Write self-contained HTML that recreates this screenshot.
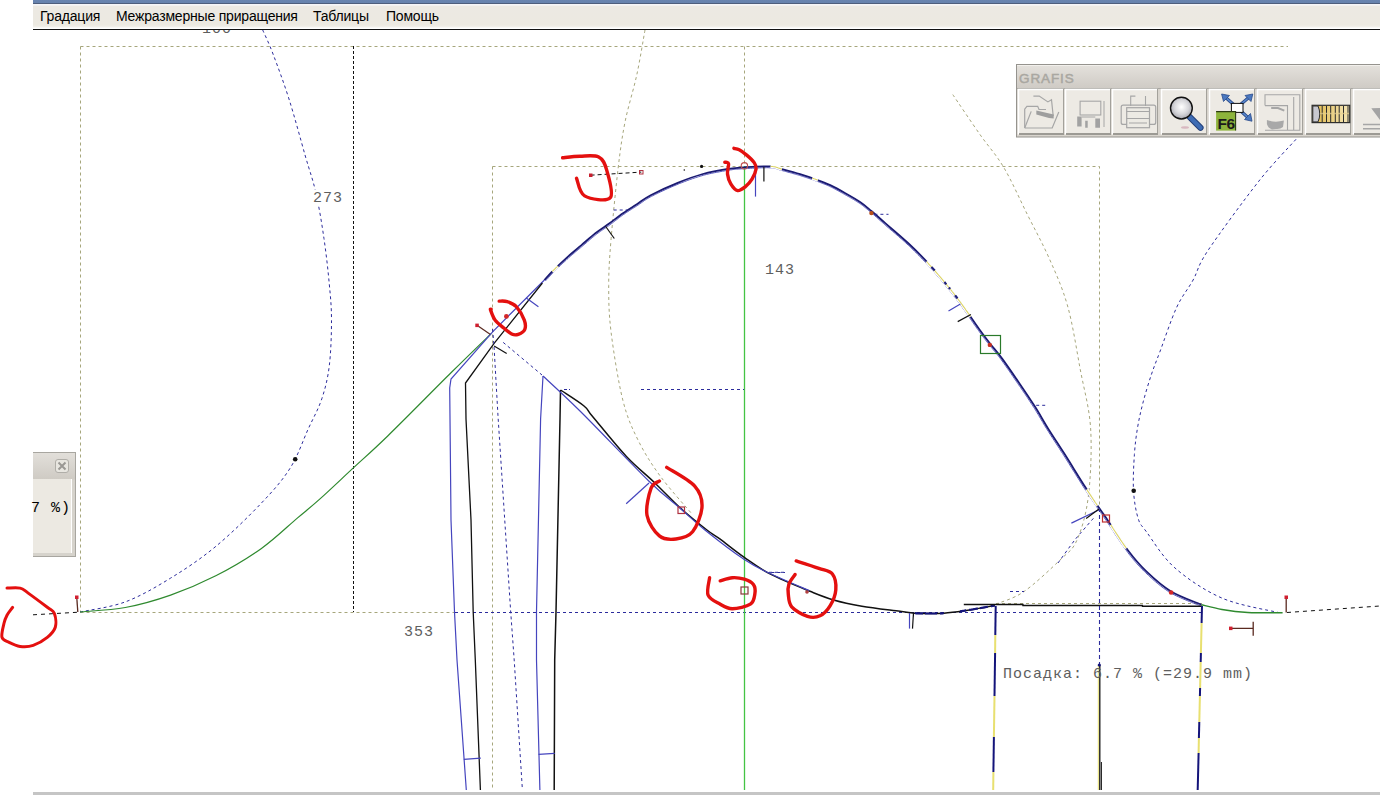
<!DOCTYPE html>
<html><head><meta charset="utf-8">
<style>
html,body{margin:0;padding:0;width:1380px;height:795px;overflow:hidden;background:#fff;position:relative;font-family:"Liberation Sans",sans-serif;}
#top{position:absolute;left:33px;top:0;width:1347px;height:4px;background:linear-gradient(#6884B0 0,#6682AD 2.8px,#4E5E7C 3px,#4E5E7C 4px);}
#menu{position:absolute;left:33px;top:4px;width:1347px;height:25px;background:linear-gradient(#F5F5F8 0,#F5F5F8 1px,#ECE9E3 2.5px,#ECE9E1 21px,#F2F0EB 23px,#FFFFFF 24px,#FFFFFF 25px);}
#menuline{position:absolute;left:33px;top:29px;width:1347px;height:1px;background:#111;}
.mi{position:absolute;top:3.5px;font-size:14px;letter-spacing:-0.2px;color:#000;white-space:nowrap;}
#bottom{position:absolute;left:33px;top:792px;width:1347px;height:3px;background:#C5C5C5;}
svg{position:absolute;left:0;top:0;}
.lbl{position:absolute;font-family:"Liberation Mono",monospace;font-size:15px;letter-spacing:1px;color:#5E5E5E;white-space:pre;line-height:16px;}
#dlg{position:absolute;left:33px;top:452px;width:43px;height:105px;background:linear-gradient(#E2DFDA,#CFCBC4 26px,#D6D3CC 27px);border:1px solid #A8A6A0;border-left:none;box-sizing:border-box;}
#dlgin{position:absolute;left:33px;top:479px;width:39px;height:74px;background:#ECE9E2;border-right:1px solid #FFFFFF;box-sizing:border-box;}
#dlgx{position:absolute;left:55px;top:459px;width:14px;height:14px;border:1px solid #B0AEA8;border-radius:3px;background:#E8E6E0;box-sizing:border-box;}
</style></head><body>
<svg width="1380" height="795" viewBox="0 0 1380 795" id="draw">
<path d="M80.5,46.5 H1288" fill="none" stroke="#A6A67C" stroke-width="1" stroke-dasharray="3 3" />
<path d="M80.5,46.5 V612.5" fill="none" stroke="#A6A67C" stroke-width="1" stroke-dasharray="3 3" />
<path d="M80.5,612.5 H455" fill="none" stroke="#A6A67C" stroke-width="1" stroke-dasharray="3 3" />
<path d="M492.5,166.5 H1099.5 V508" fill="none" stroke="#A6A67C" stroke-width="1" stroke-dasharray="3 3" />
<path d="M492.5,166.5 V790" fill="none" stroke="#A6A67C" stroke-width="1" stroke-dasharray="3 3" />
<path d="M744.5,46.5 V166" fill="none" stroke="#A6A67C" stroke-width="1" stroke-dasharray="3 3" />
<path d="M996,603.5 H1202" fill="none" stroke="#A6A67C" stroke-width="1" stroke-dasharray="3 3" />
<path d="M645.0,30.0 C643.6,37.5 640.1,59.5 636.8,74.8 C633.5,90.1 628.2,106.1 625.1,121.7 C622.0,137.3 620.4,149.0 618.1,168.5 C615.8,188.0 612.7,219.3 611.1,238.8 C609.5,258.3 608.7,270.0 608.7,285.6 C608.7,301.2 608.8,313.3 611.1,332.4 C613.5,351.5 618.3,382.1 622.8,400.0 C627.3,417.9 631.7,427.2 638.0,440.0 C644.3,452.8 651.6,464.3 660.6,476.6 C669.6,488.9 686.8,507.8 692.0,514.0" fill="none" stroke="#A6A67C" stroke-width="1" stroke-dasharray="3 3" />
<path d="M952.8,94.6 C957.3,101.3 971.6,122.5 980.1,134.7 C988.6,146.8 995.9,154.2 1003.8,167.5 C1011.7,180.8 1019.9,199.6 1027.5,214.8 C1035.1,230.0 1042.6,243.4 1049.3,258.6 C1056.0,273.8 1062.4,287.5 1067.6,306.0 C1072.8,324.5 1076.5,349.4 1080.3,369.7 C1084.1,390.0 1089.2,406.9 1090.6,428.0 C1091.9,449.1 1090.7,477.3 1088.4,496.0 C1086.1,514.7 1081.7,529.3 1077.0,540.0 C1072.3,550.7 1068.9,551.4 1060.0,560.0 C1051.1,568.6 1034.2,584.6 1023.5,591.9 C1012.8,599.2 1000.6,602.0 996.0,604.0" fill="none" stroke="#A6A67C" stroke-width="1" stroke-dasharray="3 3" />
<path d="M353.5,46 V612" fill="none" stroke="#111" stroke-width="1" stroke-dasharray="3 2" />
<path d="M33,614.8 L77,612.3" fill="none" stroke="#111" stroke-width="1" stroke-dasharray="4 4" />
<path d="M1287,612.5 L1380,606" fill="none" stroke="#111" stroke-width="1" stroke-dasharray="4 4" />
<path d="M455,612.5 H1201" fill="none" stroke="#2C2C9C" stroke-width="1" stroke-dasharray="3 3" />
<path d="M744.5,166 V790" fill="none" stroke="#44C444" stroke-width="1.3" />
<path d="M641,389.5 H744" fill="none" stroke="#2C2C9C" stroke-width="1" stroke-dasharray="3 3" />
<path d="M262.7,30.0 C264.5,34.1 268.9,43.0 273.3,54.7 C277.7,66.4 284.0,83.1 289.3,100.0 C294.6,116.9 300.9,140.4 305.3,156.0 C309.8,171.6 312.9,179.5 316.0,193.3 C319.1,207.1 321.8,223.5 324.0,238.7 C326.2,253.9 328.1,270.7 329.3,284.3 C330.6,297.9 331.5,306.8 331.5,320.4 C331.5,334.0 330.9,352.6 329.3,365.7 C327.7,378.8 325.3,388.2 321.8,398.8 C318.3,409.4 313.5,417.4 308.2,429.0 C302.9,440.6 298.0,455.8 290.1,468.2 C282.2,480.6 273.5,490.4 261.1,503.4 C248.7,516.4 230.9,533.9 215.8,546.4 C200.7,558.9 185.7,568.9 170.6,578.1 C155.5,587.4 140.4,596.2 125.3,601.9 C110.2,607.5 87.5,610.3 80.0,612.0" fill="none" stroke="#2C2C9C" stroke-width="1" stroke-dasharray="3 3" />
<path d="M1296.0,139.3 C1289.8,146.3 1273.5,162.6 1258.8,181.2 C1244.1,199.8 1218.7,234.4 1207.7,250.9 C1196.8,267.4 1198.3,270.5 1193.1,280.0 C1187.9,289.5 1182.0,295.7 1176.5,307.7 C1171.0,319.7 1164.0,340.9 1159.8,352.0 C1155.6,363.1 1154.3,365.9 1151.5,374.2 C1148.7,382.5 1145.5,393.1 1143.2,401.9 C1140.9,410.7 1139.2,418.0 1137.7,426.8 C1136.2,435.6 1135.1,443.9 1134.4,454.5 C1133.7,465.1 1132.9,479.8 1133.5,490.5 C1134.1,501.2 1136.0,511.7 1138.2,518.6 C1140.4,525.5 1140.5,523.8 1146.6,532.0 C1152.7,540.2 1162.3,556.9 1174.9,567.9 C1187.5,578.9 1204.7,590.6 1222.0,598.1 C1239.3,605.6 1269.2,610.2 1278.7,612.6" fill="none" stroke="#2C2C9C" stroke-width="1" stroke-dasharray="3 3" />
<path d="M80.0,612.0 C87.5,611.2 110.2,610.3 125.3,607.5 C140.4,604.7 155.5,600.4 170.6,595.1 C185.7,589.8 200.7,583.5 215.8,575.8 C230.9,568.1 247.5,558.3 261.1,548.7 C274.7,539.1 287.5,526.4 297.3,518.1 C307.1,509.8 310.8,507.2 320.0,498.9 C329.2,490.6 341.5,478.9 352.8,468.4 C364.1,457.9 371.6,451.6 388.0,435.7 C404.4,419.8 433.8,389.8 451.0,372.8 C468.2,355.8 484.3,340.3 491.0,333.8" fill="none" stroke="#2F8A2F" stroke-width="1.2" />
<path d="M1201.3,604.7 C1204.8,605.5 1214.2,608.1 1222.0,609.4 C1229.8,610.7 1237.7,611.8 1247.8,612.4 C1257.9,613.0 1276.8,612.7 1282.6,612.8" fill="none" stroke="#2F8A2F" stroke-width="1.5" />
<path d="M544.4,280.0 L493.1,331.3 L451.0,379.0 L449.7,388.0 L451.0,520.0 L454.5,612.0 L457.0,660.0 L466.3,790.0" fill="none" stroke="#4545BE" stroke-width="1.2" />
<path d="M542.4,283.0 L494.1,343.4 L465.5,383.0 L466.0,419.0 L471.0,520.0 L473.2,612.0 L475.3,660.0 L480.4,790.0" fill="none" stroke="#111" stroke-width="1.3" />
<path d="M492.6,329.0 L494.0,346.0 L498.0,416.0 L510.7,612.0 L514.2,660.0 L522.4,790.0" fill="none" stroke="#2C2C9C" stroke-width="1" stroke-dasharray="3 3" />
<path d="M503.2,342.4 L542.0,375.0" fill="none" stroke="#2C2C9C" stroke-width="1" stroke-dasharray="3 3" />
<path d="M543.0,376.0 L540.6,419.0 L536.5,612.0 L536.5,660.0 L539.9,790.0" fill="none" stroke="#4545BE" stroke-width="1.2" />
<path d="M560.5,390.0 L560.0,419.0 L556.0,612.0 L554.7,660.0 L554.2,790.0" fill="none" stroke="#111" stroke-width="1.5" />
<path d="M463.8,759.4 L480.8,758.2" fill="none" stroke="#4545BE" stroke-width="1.2" />
<path d="M538.5,754.3 L554.7,753.4" fill="none" stroke="#4545BE" stroke-width="1.2" />
<path d="M494.1,345.9 L506.7,353.4" fill="none" stroke="#111" stroke-width="1.2" />
<path d="M526.3,298.1 L538.4,306.7" fill="none" stroke="#4545BE" stroke-width="1.2" />
<path d="M560.5,390.0 C564.4,392.7 578.6,401.5 584.0,406.0 C589.4,410.5 585.9,408.6 593.0,417.0 C600.1,425.4 616.1,445.6 626.4,456.5 C636.7,467.4 645.6,474.1 654.6,482.7 C663.6,491.3 671.5,500.0 680.2,507.9 C688.9,515.8 700.2,524.8 706.9,530.0 C713.6,535.2 714.0,534.6 720.2,539.2 C726.4,543.8 735.8,551.5 744.3,557.4 C752.8,563.3 760.5,569.1 771.5,574.7 C782.5,580.4 799.6,587.1 810.0,591.3 C820.4,595.5 825.0,597.5 833.6,600.0 C842.2,602.5 850.8,604.3 861.9,606.2 C873.0,608.1 891.1,610.1 900.0,611.3 C908.9,612.5 907.7,612.9 915.0,613.2 C922.3,613.5 935.0,613.7 943.8,613.2 C952.6,612.7 959.2,611.5 967.7,610.2 C976.2,608.9 990.3,606.3 994.8,605.5" fill="none" stroke="#111" stroke-width="1.5" />
<path d="M543.0,376.0 C549.2,381.8 562.4,393.6 580.0,411.0 C597.6,428.4 631.7,464.4 648.5,480.7 C665.3,497.0 671.3,500.6 680.7,508.8 C690.1,517.0 694.3,521.5 704.9,530.0 C715.5,538.5 733.6,552.4 744.3,559.6 C755.0,566.8 758.2,567.8 769.0,573.0 C779.8,578.2 802.5,587.7 809.2,590.6" fill="none" stroke="#4545BE" stroke-width="1.2" />
<path d="M915.0,613.2 L916.4,613.3 L918.0,613.3 L919.6,613.4 L921.3,613.4 L923.1,613.4 L925.0,613.5 L926.9,613.5 L928.8,613.5 L930.8,613.5 L932.8,613.5 L934.7,613.5 L936.6,613.5 L938.5,613.4 L940.3,613.4 L942.1,613.3 L943.8,613.2" fill="none" stroke="#14147A" stroke-width="2.2" stroke-dasharray="8 2 12 3" />
<path d="M960.2,611.4 L961.6,611.1 L963.1,610.9 L964.6,610.7 L966.1,610.4 L967.7,610.2 L969.4,609.9 L971.1,609.7 L973.0,609.4 L974.9,609.0 L976.8,608.7 L978.8,608.4 L980.8,608.0 L982.7,607.7 L984.6,607.3 L986.5,607.0 L988.2,606.7 L989.9,606.4 L991.4,606.1 L992.7,605.9 L993.8,605.7 L994.8,605.5" fill="none" stroke="#14147A" stroke-width="2.2" stroke-dasharray="6 3 9 2 8 3" />
<path d="M626.2,503.8 L649.0,483.0" fill="none" stroke="#4545BE" stroke-width="1.2" />
<path d="M771.5,572.5 H785" fill="none" stroke="#2C2C9C" stroke-width="1" stroke-dasharray="3 3" />
<path d="M769,572.3 H785" fill="none" stroke="#2C2C9C" stroke-width="1" stroke-dasharray="3 3" />
<path d="M909.5,613 V628.6" fill="none" stroke="#4545BE" stroke-width="1.2" />
<path d="M913.5,613 L912.5,628.6" fill="none" stroke="#111" stroke-width="1.2" />
<path d="M1010,591.5 H1024" fill="none" stroke="#2C2C9C" stroke-width="1" stroke-dasharray="3 3" />
<path d="M545.4,281.0 L545.7,280.6 L546.1,280.2 L546.5,279.7 L547.0,279.2 L547.5,278.7 L548.1,278.1 L548.7,277.4 L549.3,276.8 L549.9,276.1 L550.6,275.4 L551.2,274.7 L551.9,273.9 L552.6,273.2 L553.3,272.4 L554.1,271.7 L554.8,271.0 L555.5,270.3 L556.3,269.5 L557.1,268.7 L557.9,267.9 L558.8,267.1 L559.7,266.2 L560.5,265.4 L561.4,264.5 L562.3,263.7 L563.3,262.8 L564.2,261.9 L565.1,261.1 L566.0,260.3 L566.9,259.4 L567.8,258.6 L568.6,257.8 L569.5,257.1 L570.4,256.3 L571.2,255.6 L572.1,254.8 L572.9,254.1 L573.8,253.4 L574.6,252.7 L575.5,251.9 L576.4,251.2 L577.2,250.5 L578.1,249.8 L578.9,249.1 L579.8,248.4 L580.7,247.6 L581.5,246.9 L582.4,246.2 L583.3,245.4 L584.1,244.7 L585.0,243.9 L585.9,243.2 L586.8,242.4 L587.6,241.6 L588.5,240.9 L589.4,240.1 L590.2,239.4 L591.1,238.6 L592.0,237.9 L592.8,237.2 L593.7,236.5 L594.5,235.8 L595.4,235.1 L596.3,234.4 L597.1,233.8 L598.0,233.1 L598.8,232.5 L599.7,231.9 L600.5,231.3 L601.4,230.7 L602.2,230.1 L603.1,229.5 L604.0,228.9 L604.8,228.4 L605.7,227.8 L606.5,227.2 L607.4,226.6 L608.3,226.0 L609.2,225.4 L610.0,224.7 L610.9,224.1 L611.8,223.4 L612.6,222.8 L613.5,222.1 L614.4,221.5 L615.2,220.8 L616.1,220.1 L616.9,219.5 L617.8,218.8 L618.7,218.1 L619.5,217.5 L620.4,216.8 L621.2,216.2 L622.1,215.6 L622.9,215.0 L623.8,214.3 L624.7,213.8 L625.5,213.2 L626.4,212.6 L627.2,212.0 L628.1,211.5 L629.0,210.9 L629.8,210.3 L630.7,209.8 L631.6,209.2 L632.4,208.7 L633.3,208.1 L634.2,207.6 L635.0,207.0 L635.9,206.5 L636.8,205.9 L637.7,205.4 L638.5,204.8 L639.3,204.2 L640.1,203.7 L640.9,203.2 L641.6,202.6 L642.3,202.1 L643.1,201.6 L643.8,201.1 L644.5,200.5 L645.3,200.0 L646.2,199.4 L647.1,198.9 L648.0,198.3 L649.0,197.7 L650.1,197.1 L651.4,196.4 L652.7,195.8 L654.1,195.0 L655.6,194.3 L657.2,193.5 L658.8,192.7 L660.5,191.9 L662.3,191.1 L664.1,190.3 L665.9,189.4 L667.7,188.6 L669.5,187.8 L671.3,187.0 L673.1,186.2 L674.9,185.5 L676.6,184.8 L678.2,184.1 L679.8,183.4 L681.5,182.8 L683.0,182.2 L684.6,181.6 L686.2,181.0 L687.8,180.4 L689.3,179.8 L690.9,179.3 L692.4,178.7 L694.0,178.2 L695.5,177.7 L697.1,177.2 L698.6,176.7 L700.2,176.2 L701.7,175.8 L703.3,175.3 L704.8,174.9 L706.4,174.5 L708.1,174.1 L709.7,173.7 L711.3,173.4 L713.0,173.0 L714.6,172.7 L716.3,172.4 L717.9,172.1 L719.5,171.8 L721.0,171.5 L722.6,171.2 L724.1,171.0 L725.5,170.7 L726.9,170.5 L728.2,170.3 L729.5,170.1 L730.6,169.9 L731.7,169.8 L732.7,169.6 L733.6,169.5 L734.5,169.4 L735.4,169.3 L736.3,169.2 L737.1,169.2 L738.0,169.1 L738.9,169.0 L739.9,169.0 L740.9,168.9 L742.0,168.8 L743.2,168.8 L744.5,168.7 L745.9,168.6 L747.4,168.5 L749.0,168.4 L750.7,168.3 L752.4,168.2 L754.2,168.2 L756.0,168.1 L757.9,168.0 L759.7,167.9 L761.5,167.8 L763.2,167.8 L764.9,167.8 L766.5,167.7 L768.0,167.7 L769.3,167.8 L770.5,167.8 L771.6,167.9 L772.5,167.9 L773.4,168.0 L774.1,168.1 L774.7,168.3 L775.3,168.4 L775.9,168.6 L776.4,168.7 L776.9,168.9 L777.4,169.1 L778.0,169.3 L778.6,169.5 L779.2,169.7 L779.9,170.0 L780.7,170.2 L781.6,170.5 L782.6,170.7 L783.6,171.0 L784.6,171.2 L785.7,171.5 L786.9,171.8 L788.0,172.2 L789.2,172.5 L790.4,172.8 L791.6,173.1 L792.8,173.5 L794.0,173.8 L795.2,174.1 L796.3,174.5 L797.5,174.8 L798.5,175.1 L799.6,175.4 L800.6,175.7 L801.6,176.1 L802.6,176.4 L803.6,176.7 L804.5,177.0 L805.4,177.3 L806.4,177.6 L807.3,177.9 L808.2,178.2 L809.1,178.5 L810.0,178.8 L810.9,179.1 L811.8,179.4 L812.8,179.7 L813.7,180.1 L814.6,180.4 L815.6,180.8 L816.5,181.1 L817.4,181.4 L818.4,181.8 L819.3,182.1 L820.3,182.5 L821.2,182.9 L822.1,183.2 L823.1,183.6 L824.0,184.0 L824.9,184.3 L825.9,184.7 L826.8,185.1 L827.7,185.5 L828.7,185.9 L829.6,186.4 L830.5,186.8 L831.5,187.3 L832.4,187.7 L833.3,188.2 L834.3,188.7 L835.2,189.2 L836.1,189.7 L837.1,190.2 L838.0,190.7 L839.0,191.2 L839.9,191.8 L840.8,192.3 L841.8,192.8 L842.7,193.3 L843.7,193.9 L844.6,194.4 L845.6,195.0 L846.5,195.5 L847.5,196.1 L848.5,196.6 L849.5,197.2 L850.4,197.7 L851.4,198.3 L852.4,198.9 L853.4,199.4 L854.3,200.0 L855.3,200.6 L856.2,201.1 L857.1,201.7 L857.9,202.3 L858.8,202.8 L859.6,203.4 L860.4,203.9 L861.1,204.4 L861.8,204.9 L862.5,205.4 L863.2,206.0 L863.8,206.5 L864.4,207.0 L865.1,207.5 L865.7,208.0 L866.3,208.5 L867.0,209.1 L867.6,209.6 L868.3,210.2 L869.0,210.8 L869.7,211.4 L870.5,212.1 L871.3,212.7 L872.0,213.4 L872.8,214.1 L873.6,214.7 L874.4,215.4 L875.2,216.1 L876.0,216.8 L876.8,217.6 L877.7,218.3 L878.5,219.1 L879.4,219.9 L880.4,220.8 L881.4,221.6 L882.4,222.5 L883.5,223.5 L884.6,224.5 L885.8,225.5 L887.0,226.6 L888.3,227.7 L889.7,228.9 L891.1,230.1 L892.6,231.3 L894.1,232.6 L895.6,233.9 L897.1,235.2 L898.6,236.5 L900.0,237.8 L901.5,239.0 L903.0,240.3 L904.4,241.6 L905.7,242.8 L907.0,244.0 L908.3,245.2 L909.6,246.4 L910.8,247.5 L912.0,248.7 L913.2,249.8 L914.3,251.0 L915.5,252.1 L916.6,253.2 L917.7,254.4 L918.9,255.5 L920.0,256.7 L921.1,257.8 L922.2,259.0 L923.4,260.2 L924.5,261.4 L925.7,262.7 L926.8,263.9 L928.0,265.2 L929.2,266.5 L930.4,267.8 L931.6,269.1 L932.7,270.5 L933.9,271.8 L935.1,273.2 L936.3,274.6 L937.4,275.9 L938.6,277.3 L939.8,278.6 L940.9,280.0 L942.0,281.3 L943.1,282.7 L944.2,284.0 L945.3,285.3 L946.3,286.6 L947.4,287.8 L948.4,289.1 L949.4,290.4 L950.4,291.6 L951.4,292.8 L952.4,294.1 L953.4,295.4 L954.3,296.6 L955.3,297.9 L956.3,299.2 L957.3,300.5 L958.3,301.9 L959.3,303.2 L960.4,304.6 L961.4,306.1 L962.5,307.6 L963.6,309.2 L964.8,310.8 L965.9,312.4 L967.1,314.1 L968.2,315.7 L969.4,317.4 L970.5,319.1 L971.6,320.7 L972.7,322.3 L973.8,323.9 L974.8,325.4 L975.9,326.8 L976.8,328.2 L977.8,329.5 L978.6,330.7 L979.5,331.9 L980.3,333.0 L981.0,334.0 L981.7,335.0 L982.4,335.9 L983.1,336.8 L983.8,337.7 L984.4,338.6 L985.1,339.4 L985.7,340.3 L986.4,341.1 L987.0,342.0 L987.7,342.8 L988.4,343.7 L989.1,344.7 L989.8,345.6 L990.5,346.5 L991.3,347.4 L992.0,348.2 L992.7,349.1 L993.4,349.9 L994.1,350.8 L994.8,351.6 L995.5,352.5 L996.2,353.4 L997.0,354.3 L997.8,355.3 L998.6,356.3 L999.4,357.4 L1000.3,358.5 L1001.2,359.7 L1002.1,361.0 L1003.1,362.4 L1004.1,363.8 L1005.2,365.3 L1006.3,366.9 L1007.4,368.5 L1008.6,370.1 L1009.7,371.8 L1010.9,373.4 L1012.0,375.1 L1013.2,376.8 L1014.3,378.5 L1015.4,380.1 L1016.5,381.7 L1017.6,383.3 L1018.6,384.8 L1019.7,386.3 L1020.7,387.7 L1021.6,389.2 L1022.6,390.6 L1023.6,392.0 L1024.5,393.4 L1025.5,394.8 L1026.4,396.2 L1027.4,397.6 L1028.3,399.0 L1029.2,400.4 L1030.1,401.8 L1031.0,403.2 L1031.9,404.6 L1032.8,405.9 L1033.7,407.3 L1034.6,408.7 L1035.5,410.1 L1036.3,411.5 L1037.1,412.9 L1038.0,414.3 L1038.8,415.7 L1039.6,417.0 L1040.4,418.4 L1041.2,419.8 L1042.1,421.2 L1042.9,422.6 L1043.7,424.1 L1044.6,425.5 L1045.5,427.0 L1046.4,428.4 L1047.3,429.9 L1048.3,431.4 L1049.2,432.9 L1050.2,434.4 L1051.1,435.9 L1052.1,437.4 L1053.1,438.9 L1054.1,440.5 L1055.1,442.0 L1056.1,443.6 L1057.1,445.1 L1058.2,446.8 L1059.3,448.4 L1060.3,450.1 L1061.4,451.8 L1062.6,453.5 L1063.7,455.4 L1064.9,457.2 L1066.2,459.2 L1067.4,461.3 L1068.8,463.4 L1070.1,465.6 L1071.5,467.8 L1072.9,470.0 L1074.3,472.2 L1075.7,474.5 L1077.0,476.7 L1078.4,478.8 L1079.7,480.9 L1081.0,483.0 L1082.2,484.9 L1083.4,486.8 L1084.5,488.6 L1085.6,490.2 L1086.6,491.8 L1087.6,493.4 L1088.6,494.9 L1089.6,496.4 L1090.5,497.8 L1091.4,499.1 L1092.3,500.4 L1093.2,501.7 L1094.0,502.9 L1094.8,504.1 L1095.5,505.3 L1096.3,506.3 L1097.0,507.4 L1097.7,508.4 L1098.3,509.4 L1098.9,510.3 L1099.4,511.0 L1099.9,511.6 L1100.2,512.1 L1100.6,512.5 L1100.8,512.9 L1101.1,513.3 L1101.4,513.6 L1101.6,514.0 L1101.9,514.4 L1102.3,514.8 L1102.7,515.4 L1103.2,516.1 L1103.7,516.9 L1104.4,517.9 L1105.2,519.1 L1106.2,520.5 L1107.2,522.0 L1108.4,523.8 L1109.6,525.7 L1110.9,527.7 L1112.3,529.8 L1113.7,531.9 L1115.1,534.2 L1116.6,536.4 L1118.1,538.7 L1119.6,540.9 L1121.0,543.1 L1122.5,545.2 L1123.9,547.2 L1125.3,549.1 L1126.6,550.8 L1127.8,552.5 L1129.0,554.1 L1130.2,555.6 L1131.4,557.0 L1132.5,558.5 L1133.6,559.8 L1134.8,561.2 L1135.9,562.5 L1137.0,563.8 L1138.2,565.1 L1139.3,566.3 L1140.5,567.6 L1141.7,568.9 L1143.0,570.1 L1144.3,571.4 L1145.6,572.7 L1147.0,574.0 L1148.4,575.3 L1149.8,576.7 L1151.3,578.0 L1152.7,579.3 L1154.2,580.6 L1155.7,581.9 L1157.2,583.2 L1158.8,584.5 L1160.4,585.7 L1162.0,587.0 L1163.6,588.2 L1165.3,589.4 L1166.9,590.5 L1168.7,591.6 L1170.4,592.7 L1172.2,593.8 L1174.2,594.8 L1176.2,595.8 L1178.4,596.8 L1180.6,597.8 L1182.8,598.8 L1185.0,599.7 L1187.2,600.6 L1189.4,601.5 L1191.4,602.3 L1193.4,603.1 L1195.2,603.8 L1196.9,604.4 L1198.4,605.0 L1199.7,605.5 L1200.8,606.0" fill="none" stroke="#4848B8" stroke-width="0.9" />
<path d="M544.4,280.0 C546.0,278.3 549.9,273.9 553.8,270.0 C557.7,266.1 563.1,260.9 567.7,256.8 C572.3,252.7 576.9,249.0 581.5,245.1 C586.1,241.2 590.8,236.9 595.4,233.3 C600.0,229.7 604.6,226.9 609.2,223.6 C613.8,220.2 618.4,216.4 623.0,213.2 C627.6,210.0 632.3,207.2 636.9,204.2 C641.5,201.2 643.9,198.8 650.7,195.2 C657.5,191.6 669.0,186.3 677.7,182.8 C686.4,179.3 694.5,176.3 702.9,174.0 C711.3,171.7 721.1,170.0 728.0,168.9 C734.9,167.8 737.3,167.7 744.4,167.3 C751.5,166.9 764.3,166.1 770.6,166.4 C776.9,166.7 777.1,167.8 782.0,169.1 C786.9,170.4 794.5,172.4 800.0,174.1 C805.5,175.8 810.1,177.3 815.1,179.1 C820.1,180.9 825.2,182.8 830.2,185.1 C835.2,187.4 840.3,190.3 845.3,193.2 C850.3,196.0 856.0,199.2 860.4,202.2 C864.8,205.2 867.2,207.5 871.4,211.0 C875.6,214.5 879.4,218.1 885.5,223.4 C891.6,228.7 901.1,236.6 908.0,243.0 C914.9,249.4 920.5,255.0 926.7,261.7 C932.9,268.4 939.5,276.1 945.3,283.1 C951.1,290.1 955.9,296.2 961.5,303.8 C967.1,311.4 974.1,322.0 978.9,328.7 C983.7,335.4 986.3,338.8 990.2,343.8 C994.1,348.8 997.4,352.2 1002.3,358.9 C1007.2,365.6 1014.4,376.1 1019.8,384.0 C1025.2,391.9 1030.1,399.1 1034.9,406.6 C1039.7,414.1 1043.5,421.2 1048.5,429.2 C1053.5,437.2 1058.7,444.8 1064.9,454.6 C1071.1,464.4 1079.9,478.8 1085.7,487.8 C1091.5,496.8 1096.0,503.5 1099.5,508.6 C1103.0,513.7 1101.7,511.4 1106.4,518.3 C1111.1,525.2 1121.0,541.1 1127.7,550.0 C1134.4,558.9 1139.4,564.8 1146.6,571.7 C1153.8,578.6 1162.0,586.0 1171.1,591.5 C1180.2,597.0 1196.3,602.5 1201.3,604.7" fill="none" stroke="#1A1A72" stroke-width="1.8" />
<path d="M552.3,271.5 L553.1,270.7 L553.8,270.0 L554.5,269.3 L555.3,268.5 L556.1,267.7 L557.0,266.9 L557.8,266.1" fill="none" stroke="#FFFFFF" stroke-width="3.4" />
<path d="M552.3,271.5 L553.1,270.7 L553.8,270.0 L554.5,269.3 L555.3,268.5 L556.1,267.7 L557.0,266.9 L557.8,266.1" fill="none" stroke="#DCD468" stroke-width="1.1" />
<path d="M770.6,166.4 L771.7,166.5 L772.7,166.5 L773.6,166.7 L774.3,166.8 L775.0,166.9 L775.7,167.0 L776.3,167.2 L776.8,167.4 L777.4,167.6 L777.9,167.8 L778.4,168.0 L779.0,168.2 L779.7,168.4 L780.4,168.6 L781.1,168.9 L782.0,169.1" fill="none" stroke="#FFFFFF" stroke-width="3.4" />
<path d="M770.6,166.4 L771.7,166.5 L772.7,166.5 L773.6,166.7 L774.3,166.8 L775.0,166.9 L775.7,167.0 L776.3,167.2 L776.8,167.4 L777.4,167.6 L777.9,167.8 L778.4,168.0 L779.0,168.2 L779.7,168.4 L780.4,168.6 L781.1,168.9 L782.0,169.1" fill="none" stroke="#DCD468" stroke-width="1.1" />
<path d="M812.3,178.1 L813.2,178.4 L814.2,178.8 L815.1,179.1 L816.0,179.4 L817.0,179.8 L817.9,180.1" fill="none" stroke="#FFFFFF" stroke-width="3.4" />
<path d="M812.3,178.1 L813.2,178.4 L814.2,178.8 L815.1,179.1 L816.0,179.4 L817.0,179.8 L817.9,180.1" fill="none" stroke="#DCD468" stroke-width="1.1" />
<path d="M926.7,261.7 L927.9,263.0 L929.0,264.3 L930.2,265.6 L931.4,266.9 L932.6,268.2 L933.8,269.6 L935.0,270.9 L936.2,272.3 L937.3,273.6 L938.5,275.0 L939.7,276.4 L940.8,277.7 L942.0,279.1 L943.1,280.4 L944.2,281.8 L945.3,283.1 L946.4,284.4 L947.4,285.7 L948.5,287.0 L949.5,288.2 L950.5,289.5 L951.5,290.7 L952.5,292.0 L953.5,293.2 L954.5,294.5 L955.4,295.8 L956.4,297.0 L957.4,298.3 L958.4,299.7 L959.4,301.0 L960.5,302.4 L961.5,303.8 L962.6,305.3 L963.7,306.8 L964.8,308.3 L965.9,310.0 L967.1,311.6 L968.2,313.3 L969.4,314.9 L970.5,316.6" fill="none" stroke="#FFFFFF" stroke-width="3.4" />
<path d="M926.7,261.7 L927.9,263.0 L929.0,264.3 L930.2,265.6 L931.4,266.9 L932.6,268.2 L933.8,269.6 L935.0,270.9 L936.2,272.3 L937.3,273.6 L938.5,275.0 L939.7,276.4 L940.8,277.7 L942.0,279.1 L943.1,280.4 L944.2,281.8 L945.3,283.1 L946.4,284.4 L947.4,285.7 L948.5,287.0 L949.5,288.2 L950.5,289.5 L951.5,290.7 L952.5,292.0 L953.5,293.2 L954.5,294.5 L955.4,295.8 L956.4,297.0 L957.4,298.3 L958.4,299.7 L959.4,301.0 L960.5,302.4 L961.5,303.8 L962.6,305.3 L963.7,306.8 L964.8,308.3 L965.9,310.0 L967.1,311.6 L968.2,313.3 L969.4,314.9 L970.5,316.6" fill="none" stroke="#DCD468" stroke-width="1.1" />
<path d="M926.7,261.7 L927.9,263.0 L929.0,264.3 L930.2,265.6 L931.4,266.9 L932.6,268.2 L933.8,269.6 L935.0,270.9 L936.2,272.3 L937.3,273.6 L938.5,275.0 L939.7,276.4 L940.8,277.7 L942.0,279.1 L943.1,280.4 L944.2,281.8 L945.3,283.1 L946.4,284.4 L947.4,285.7 L948.5,287.0 L949.5,288.2 L950.5,289.5 L951.5,290.7 L952.5,292.0 L953.5,293.2 L954.5,294.5 L955.4,295.8 L956.4,297.0 L957.4,298.3 L958.4,299.7 L959.4,301.0 L960.5,302.4 L961.5,303.8 L962.6,305.3 L963.7,306.8 L964.8,308.3 L965.9,310.0 L967.1,311.6 L968.2,313.3 L969.4,314.9 L970.5,316.6" fill="none" stroke="#1E1E7A" stroke-width="2.2" stroke-dasharray="0 7 5 15 3 4 2 8 4 20" />
<path d="M1086.8,489.5 L1087.8,491.1 L1088.8,492.6 L1089.8,494.1 L1090.8,495.6 L1091.7,497.0 L1092.6,498.4 L1093.5,499.7 L1094.3,500.9 L1095.1,502.2 L1095.9,503.3 L1096.7,504.5 L1097.4,505.6" fill="none" stroke="#FFFFFF" stroke-width="3.4" />
<path d="M1086.8,489.5 L1087.8,491.1 L1088.8,492.6 L1089.8,494.1 L1090.8,495.6 L1091.7,497.0 L1092.6,498.4 L1093.5,499.7 L1094.3,500.9 L1095.1,502.2 L1095.9,503.3 L1096.7,504.5 L1097.4,505.6" fill="none" stroke="#DCD468" stroke-width="1.1" />
<path d="M1110.8,524.9 L1112.1,526.9 L1113.4,529.0 L1114.9,531.2 L1116.3,533.4 L1117.8,535.6 L1119.3,537.9 L1120.7,540.1 L1122.2,542.3 L1123.6,544.4 L1125.1,546.4 L1126.4,548.3" fill="none" stroke="#FFFFFF" stroke-width="3.4" />
<path d="M1110.8,524.9 L1112.1,526.9 L1113.4,529.0 L1114.9,531.2 L1116.3,533.4 L1117.8,535.6 L1119.3,537.9 L1120.7,540.1 L1122.2,542.3 L1123.6,544.4 L1125.1,546.4 L1126.4,548.3" fill="none" stroke="#DCD468" stroke-width="1.1" />
<path d="M963.8,604.6 L1022.9,604.6 L1023.0,605.6 L1142.4,605.6 L1142.5,606.3 L1202.0,606.3" fill="none" stroke="#111" stroke-width="1.5" />
<path d="M995.7,606 L995.3,635" stroke="#14147A" stroke-width="2" fill="none"/>
<path d="M995.3,635 L995.1,653" stroke="#E8E070" stroke-width="2" fill="none"/>
<path d="M995.1,653 L994.5,696" stroke="#14147A" stroke-width="2" fill="none"/>
<path d="M994.5,696 L993.9,737" stroke="#E8E070" stroke-width="2" fill="none"/>
<path d="M993.9,737 L993.4,772" stroke="#14147A" stroke-width="2" fill="none"/>
<path d="M993.4,772 L993.2,790" stroke="#E8E070" stroke-width="2" fill="none"/>
<path d="M1202.0,606 L1201.6,623" stroke="#14147A" stroke-width="2" fill="none"/>
<path d="M1201.6,623 L1200.9,653" stroke="#E8E070" stroke-width="2" fill="none"/>
<path d="M1200.9,653 L1200.7,662" stroke="#14147A" stroke-width="2" fill="none"/>
<path d="M1200.7,662 L1200.1,688" stroke="#E8E070" stroke-width="2" fill="none"/>
<path d="M1200.1,688 L1199.9,696" stroke="#14147A" stroke-width="2" fill="none"/>
<path d="M1199.9,696 L1199.3,722" stroke="#E8E070" stroke-width="2" fill="none"/>
<path d="M1199.3,722 L1198.9,738" stroke="#14147A" stroke-width="2" fill="none"/>
<path d="M1198.9,738 L1198.6,753" stroke="#E8E070" stroke-width="2" fill="none"/>
<path d="M1198.6,753 L1197.7,790" stroke="#14147A" stroke-width="2" fill="none"/>
<path d="M1099.5,508 V665" fill="none" stroke="#2C2C9C" stroke-width="1.1" stroke-dasharray="4 3" />
<path d="M1099.8,665 V790" fill="none" stroke="#111" stroke-width="1.3" />
<path d="M1098.3,665 V790" fill="none" stroke="#E8E070" stroke-width="1" />
<path d="M1101.4,762 V790" fill="none" stroke="#111" stroke-width="1" />
<path d="M755.5,166 V196.6" fill="none" stroke="#4545BE" stroke-width="1.2" />
<path d="M763.9,167 V181.5" fill="none" stroke="#111" stroke-width="1.2" />
<path d="M605.7,226.5 L614.3,238.5" fill="none" stroke="#111" stroke-width="1.2" />
<path d="M948.5,311.1 L960.4,304.0" fill="none" stroke="#4545BE" stroke-width="1.2" />
<path d="M957.7,321.6 L970.9,314.5" fill="none" stroke="#111" stroke-width="1.2" />
<path d="M874.4,214.3 H888.5" fill="none" stroke="#2C2C9C" stroke-width="1" stroke-dasharray="3 3" />
<path d="M613.7,210 H627" fill="none" stroke="#2C2C9C" stroke-width="1" stroke-dasharray="3 3" />
<path d="M1036.2,405.3 H1047" fill="none" stroke="#2C2C9C" stroke-width="1" stroke-dasharray="3 3" />
<path d="M1071.4,523.1 L1099.7,509.5" fill="none" stroke="#4545BE" stroke-width="1.2" />
<path d="M1086.1,518.6 L1099.0,509.0" fill="none" stroke="#111" stroke-width="1.2" />
<path d="M1058.0,563.0 C1060.8,559.2 1070.3,545.8 1074.8,540.0 C1079.3,534.2 1081.6,532.0 1085.0,528.0 C1088.4,524.0 1093.5,518.2 1095.2,516.3" fill="none" stroke="#2C2C9C" stroke-width="1" stroke-dasharray="3 3" />
<rect x="980.5" y="335.5" width="20" height="18" fill="none" stroke="#2A7A2A" stroke-width="1.2"/>
<circle cx="295.2" cy="459.2" r="2.3" fill="#111"/>
<circle cx="1133.7" cy="490.7" r="2.3" fill="#111"/>
<circle cx="1099.3" cy="665" r="1.6" fill="#14147A"/>
<circle cx="701.6" cy="166.4" r="1.6" fill="#111"/>
<circle cx="684.3" cy="170" r="0.8" fill="#111"/>
<circle cx="506.4" cy="316.4" r="2.4" fill="#D42828"/>
<circle cx="871.4" cy="213.1" r="2.2" fill="#B8501A"/>
<circle cx="989.8" cy="344.9" r="2.2" fill="#C83020"/>
<circle cx="1171.1" cy="592.5" r="2.3" fill="#D42828"/>
<circle cx="807" cy="592" r="1.8" fill="#B04040"/>
<rect x="741" y="587" width="7" height="7" fill="none" stroke="#8A3A3A" stroke-width="1.2"/>
<rect x="678" y="507" width="6.5" height="6.5" fill="none" stroke="#B03040" stroke-width="1.2"/>
<path d="M564,389.5 H570" fill="none" stroke="#2C2C9C" stroke-width="1" stroke-dasharray="3 2" />
<rect x="1102.5" y="515" width="7" height="7" fill="none" stroke="#C03030" stroke-width="1.2"/>
<circle cx="744.4" cy="165.8" r="3.2" fill="none" stroke="#C05050" stroke-width="1.1"/>
<path d="M590.6,175.2 L641.3,172.1" fill="none" stroke="#111" stroke-width="1" stroke-dasharray="4 3" />
<rect x="589" y="173.5" width="3.5" height="3.5" fill="#C82030"/>
<rect x="639.5" y="170.5" width="3.5" height="3.5" fill="none" stroke="#B03040" stroke-width="1"/>
<path d="M477.0,325.3 L490.1,334.3" fill="none" stroke="#5A2A20" stroke-width="1.2" />
<rect x="475.3" y="323.6" width="3.5" height="3.5" fill="#D02030"/>
<path d="M76.8,598 L77.8,612" fill="none" stroke="#5A2A20" stroke-width="1.3" />
<rect x="75" y="595.5" width="3.5" height="3.5" fill="#D02030"/>
<path d="M1286.2,597 V612.5" fill="none" stroke="#5A2A20" stroke-width="1.3" />
<rect x="1284.5" y="595.5" width="3.5" height="3.5" fill="#D02030"/>
<path d="M1230.6,628.3 H1253.2 M1253.2,621.7 V635.8" fill="none" stroke="#5A2A20" stroke-width="1.3" />
<rect x="1229" y="626.6" width="3.5" height="3.5" fill="#D02030"/>
<path d="M562.6,157.8 C565.5,157.5 574.0,156.3 580.0,156.2 C586.0,156.1 594.2,154.7 598.7,157.0 C603.2,159.3 604.8,163.3 606.7,170.1 C608.6,176.9 614.0,193.4 610.3,197.7 C606.6,202.0 590.2,199.2 584.6,195.9 C579.0,192.7 577.9,181.1 576.5,178.2" fill="none" stroke="#E4100F" stroke-width="3.4" stroke-linecap="round" stroke-linejoin="round"/>
<path d="M733.9,148.3 C734.8,148.6 737.1,148.7 739.2,149.8 C741.3,150.9 744.2,153.0 746.7,155.1 C749.2,157.2 752.6,160.3 754.2,162.6 C755.8,164.9 756.5,165.9 756.1,168.7 C755.7,171.5 753.8,176.2 752.0,179.2 C750.2,182.2 747.6,184.9 745.2,186.8 C742.8,188.7 740.0,191.1 737.6,190.6 C735.2,190.1 732.5,186.6 730.8,183.8 C729.1,181.0 727.9,177.3 727.5,174.0 C727.1,170.7 728.8,165.9 728.6,164.0 C728.4,162.1 727.1,162.6 726.5,162.3 C725.9,162.0 725.1,162.3 724.8,162.3" fill="none" stroke="#E4100F" stroke-width="3.4" stroke-linecap="round" stroke-linejoin="round"/>
<path d="M499.2,301.1 C500.5,301.2 504.4,300.7 507.2,301.6 C510.0,302.5 513.4,303.6 516.3,306.7 C519.1,309.8 522.9,316.4 524.3,320.2 C525.7,324.0 525.8,326.9 524.8,329.3 C523.8,331.7 520.4,333.5 518.3,334.3 C516.2,335.1 514.6,335.3 512.3,334.3 C509.9,333.3 507.0,330.7 504.2,328.3 C501.4,325.9 497.5,323.2 495.2,320.2 C492.9,317.2 491.3,312.0 490.6,310.2 C489.9,308.4 491.0,309.4 491.1,309.2" fill="none" stroke="#E4100F" stroke-width="3.4" stroke-linecap="round" stroke-linejoin="round"/>
<path d="M666.7,467.4 C671.4,470.5 688.8,479.5 694.7,486.1 C700.6,492.7 702.4,499.3 702.0,506.9 C701.6,514.5 696.9,526.4 692.6,531.8 C688.3,537.1 681.5,538.3 676.0,539.0 C670.5,539.7 664.2,539.9 659.4,535.9 C654.6,531.9 648.4,523.2 647.0,515.2 C645.6,507.3 649.0,493.9 651.1,488.2 C653.2,482.5 658.0,482.2 659.4,481.0" fill="none" stroke="#E4100F" stroke-width="3.4" stroke-linecap="round" stroke-linejoin="round"/>
<path d="M709.6,577.7 C709.4,580.6 706.3,590.7 708.1,595.1 C709.9,599.5 716.2,601.9 720.2,604.2 C724.2,606.5 727.3,608.7 732.3,608.7 C737.3,608.7 746.6,606.7 750.4,604.2 C754.2,601.7 754.4,596.9 754.9,593.6 C755.4,590.3 755.2,586.9 753.4,584.5 C751.6,582.1 747.8,580.3 744.3,579.2 C740.8,578.1 736.3,577.4 732.3,577.7 C728.3,578.0 722.2,580.3 720.2,580.8" fill="none" stroke="#E4100F" stroke-width="3.4" stroke-linecap="round" stroke-linejoin="round"/>
<path d="M795.1,574.5 C794.1,576.1 790.0,580.8 788.9,584.1 C787.8,587.4 787.8,590.5 788.3,594.3 C788.8,598.1 788.5,603.1 791.7,606.8 C794.9,610.5 802.8,614.9 807.5,616.4 C812.2,617.9 816.2,617.6 820.0,615.8 C823.8,614.0 827.6,609.9 830.2,605.6 C832.8,601.3 835.4,595.1 835.8,589.8 C836.2,584.5 835.2,577.6 832.4,574.0 C829.6,570.4 824.9,570.5 818.9,568.3 C812.9,566.1 800.0,562.1 796.2,560.9" fill="none" stroke="#E4100F" stroke-width="3.4" stroke-linecap="round" stroke-linejoin="round"/>
<path d="M12.6,607.4 C11.7,608.7 8.4,612.6 7.0,615.2 C5.6,617.9 4.8,619.6 4.0,623.3 C3.2,627.0 1.1,634.2 2.0,637.4 C2.9,640.6 6.1,640.9 9.1,642.4 C12.1,643.9 16.1,645.9 20.1,646.4 C24.1,646.9 28.7,646.9 33.2,645.4 C37.7,643.9 43.6,640.4 47.3,637.4 C51.0,634.4 54.1,631.3 55.3,627.3 C56.5,623.3 55.6,616.6 54.3,613.2 C53.0,609.9 51.6,610.6 47.3,607.2 C42.9,603.9 32.7,596.3 28.2,593.1 C23.7,589.9 23.6,588.9 20.1,588.1 C16.6,587.3 9.2,588.1 7.0,588.1" fill="none" stroke="#E4100F" stroke-width="3" stroke-linecap="round"/>
<rect x="312" y="189.5" width="31" height="14.5" fill="#FFFFFF"/>
</svg>
<div class="lbl" style="left:202px;top:22px">100</div>
<div class="lbl" style="left:313px;top:191px">273</div>
<div class="lbl" style="left:765px;top:263px">143</div>
<div class="lbl" style="left:404px;top:625px">353</div>
<div class="lbl" style="left:1003px;top:667px">Посадка: 6.7 % (=29.9 mm)</div>
<div id="top"></div>
<div id="menu">
<span class="mi" style="left:7px">Градация</span>
<span class="mi" style="left:83px">Межразмерные приращения</span>
<span class="mi" style="left:280px">Таблицы</span>
<span class="mi" style="left:353px">Помощь</span>
</div>
<div id="menuline"></div>
<svg id="tbsvg" width="1380" height="795" style="position:absolute;left:0;top:0">
<defs>
<linearGradient id="tg" x1="0" y1="0" x2="0" y2="1"><stop offset="0" stop-color="#E4E1DC"/><stop offset="1" stop-color="#CFCBC5"/></linearGradient>
<radialGradient id="mg" cx="0.5" cy="0.45" r="0.55"><stop offset="0" stop-color="#FFFFFF"/><stop offset="0.6" stop-color="#D6D6DA"/><stop offset="1" stop-color="#A8A8B0"/></radialGradient>
<linearGradient id="gold" x1="0" y1="0" x2="1" y2="0"><stop offset="0" stop-color="#E0B848"/><stop offset="1" stop-color="#F4E6B8"/></linearGradient>
</defs>
<rect x="1016.5" y="64.5" width="380" height="72.5" fill="#D9D5CE" stroke="#95938E" stroke-width="1"/>
<rect x="1017" y="65" width="370" height="23" fill="url(#tg)"/>
<line x1="1017" y1="65.5" x2="1380" y2="65.5" stroke="#F2F0EC" stroke-width="1"/>
<line x1="1017" y1="88.5" x2="1380" y2="88.5" stroke="#A9A7A2" stroke-width="1"/>
<text x="1019" y="82.6" font-family="Liberation Sans" font-size="13.5" fill="#A9A7A1" stroke="#A9A7A1" stroke-width="0.5" letter-spacing="0.9">GRAFIS</text>
<rect x="1018" y="89" width="46" height="46" fill="#EDEAE4"/><path d="M1018.5,134 V89.5 H1063.5" stroke="#FFFFFF" stroke-width="1.5" fill="none"/><path d="M1063.5,89 V134.5" stroke="#A3A19B" stroke-width="1" fill="none"/><path d="M1019,134 H1064" stroke="#9C9A94" stroke-width="2" fill="none"/>
<rect x="1065" y="89" width="46" height="46" fill="#EDEAE4"/><path d="M1065.5,134 V89.5 H1110.5" stroke="#FFFFFF" stroke-width="1.5" fill="none"/><path d="M1110.5,89 V134.5" stroke="#A3A19B" stroke-width="1" fill="none"/><path d="M1066,134 H1111" stroke="#9C9A94" stroke-width="2" fill="none"/>
<rect x="1112" y="89" width="46" height="46" fill="#EDEAE4"/><path d="M1112.5,134 V89.5 H1157.5" stroke="#FFFFFF" stroke-width="1.5" fill="none"/><path d="M1157.5,89 V134.5" stroke="#A3A19B" stroke-width="1" fill="none"/><path d="M1113,134 H1158" stroke="#9C9A94" stroke-width="2" fill="none"/>
<rect x="1161" y="89" width="46" height="46" fill="#EDEAE4"/><path d="M1161.5,134 V89.5 H1206.5" stroke="#FFFFFF" stroke-width="1.5" fill="none"/><path d="M1206.5,89 V134.5" stroke="#A3A19B" stroke-width="1" fill="none"/><path d="M1162,134 H1207" stroke="#9C9A94" stroke-width="2" fill="none"/>
<rect x="1209" y="89" width="46" height="46" fill="#EDEAE4"/><path d="M1209.5,134 V89.5 H1254.5" stroke="#FFFFFF" stroke-width="1.5" fill="none"/><path d="M1254.5,89 V134.5" stroke="#A3A19B" stroke-width="1" fill="none"/><path d="M1210,134 H1255" stroke="#9C9A94" stroke-width="2" fill="none"/>
<rect x="1257" y="89" width="46" height="46" fill="#EDEAE4"/><path d="M1257.5,134 V89.5 H1302.5" stroke="#FFFFFF" stroke-width="1.5" fill="none"/><path d="M1302.5,89 V134.5" stroke="#A3A19B" stroke-width="1" fill="none"/><path d="M1258,134 H1303" stroke="#9C9A94" stroke-width="2" fill="none"/>
<rect x="1305" y="89" width="46" height="46" fill="#EDEAE4"/><path d="M1305.5,134 V89.5 H1350.5" stroke="#FFFFFF" stroke-width="1.5" fill="none"/><path d="M1350.5,89 V134.5" stroke="#A3A19B" stroke-width="1" fill="none"/><path d="M1306,134 H1351" stroke="#9C9A94" stroke-width="2" fill="none"/>
<rect x="1353" y="89" width="46" height="46" fill="#EDEAE4"/><path d="M1353.5,134 V89.5 H1398.5" stroke="#FFFFFF" stroke-width="1.5" fill="none"/><path d="M1398.5,89 V134.5" stroke="#A3A19B" stroke-width="1" fill="none"/><path d="M1354,134 H1399" stroke="#9C9A94" stroke-width="2" fill="none"/>

<!-- folder -->
<path d="M1024.7,128 V109.2 L1026.9,106.3 H1037.7 L1039,109.5 H1046" fill="none" stroke="#A6A6A6" stroke-width="1.2"/>
<path d="M1024.7,128 H1052.2 L1058.8,112.1" fill="none" stroke="#A6A6A6" stroke-width="1.2"/>
<path d="M1024.7,128 L1031.2,111.4" fill="none" stroke="#A6A6A6" stroke-width="1.2"/>
<path d="M1033.4,96.1 H1039.2 L1047.9,101.9 L1051.5,99.8 L1053.2,116" fill="none" stroke="#A6A6A6" stroke-width="1.2"/>
<path d="M1036.3,110.5 L1053.7,114.5 V118.6 L1049,118 L1036.3,114.5 Z" fill="#9E9E9E"/>
<!-- floppy -->
<rect x="1080.1" y="101.2" width="20.7" height="13.8" fill="none" stroke="#A6A6A6" stroke-width="1.1"/>
<path d="M1077.2,116.4 H1081.6 V126.6 H1077.2 Z M1085.2,120.8 H1087.7 V127.7 H1085.2 Z M1095.3,118.6 H1100 V127.7 H1095.3 Z" fill="#A2A2A2"/>
<path d="M1081.6,117 H1095.3" stroke="#A6A6A6" stroke-width="1"/>
<path d="M1104,101 V127" stroke="#A6A6A6" stroke-width="1"/>
<!-- printer -->
<rect x="1121.2" y="105.2" width="34.5" height="19.2" rx="2" fill="none" stroke="#A6A6A6" stroke-width="1.2"/>
<rect x="1126.7" y="107.7" width="22.8" height="20" fill="#ECEAE4" stroke="#A6A6A6" stroke-width="1.2"/>
<path d="M1126.7,111.5 H1149.5 M1126.7,118.5 H1149.5 M1129,123 H1147" stroke="#A6A6A6" stroke-width="1.2"/>
<path d="M1130.7,106 V96.1 H1135.4 M1145.5,96 V106" fill="none" stroke="#A6A6A6" stroke-width="1.1"/>
<!-- magnifier -->
<ellipse cx="1185" cy="127.5" rx="4" ry="1.2" fill="#D8B8C0"/>
<line x1="1189.5" y1="116.8" x2="1200.5" y2="127.8" stroke="#24407A" stroke-width="6.2" stroke-linecap="round"/>
<line x1="1189.5" y1="116.8" x2="1200.5" y2="127.8" stroke="#3E6CB4" stroke-width="4.2" stroke-linecap="round"/>
<circle cx="1181.4" cy="108.1" r="10.9" fill="url(#mg)" stroke="#111" stroke-width="1.4"/>
<!-- F6 -->
<path d="M1237,107.5 L1224.5,96.5" stroke="#2A4A8A" stroke-width="3.2"/>
<path d="M1237,107.5 L1224.5,96.5" stroke="#5A8AD0" stroke-width="1.6"/>
<path d="M1221.6,94 L1229.5,95.5 L1223.5,101.5 Z" fill="#4A78C0" stroke="#2A4A8A" stroke-width="0.8"/>
<path d="M1237,107.5 L1250,96.5" stroke="#2A4A8A" stroke-width="3.2"/>
<path d="M1237,107.5 L1250,96.5" stroke="#5A8AD0" stroke-width="1.6"/>
<path d="M1252.8,94 L1245,95.5 L1251,101.5 Z" fill="#4A78C0" stroke="#2A4A8A" stroke-width="0.8"/>
<path d="M1237,107.5 L1249.5,119" stroke="#2A4A8A" stroke-width="3.2"/>
<path d="M1237,107.5 L1249.5,119" stroke="#5A8AD0" stroke-width="1.6"/>
<path d="M1252,121.2 L1250.5,113.5 L1244.5,119.5 Z" fill="#4A78C0" stroke="#2A4A8A" stroke-width="0.8"/>
<rect x="1231.4" y="103.4" width="11.6" height="9" fill="#FFFFFF" stroke="#111" stroke-width="1"/>
<rect x="1216.1" y="111.4" width="19.6" height="19.2" fill="#8DB43C"/>
<path d="M1216.1,111.6 H1235.6 V130.6" fill="none" stroke="#2C3A12" stroke-width="1.1"/>
<text x="1217.6" y="128.5" font-family="Liberation Sans" font-size="15.5" font-weight="bold" fill="#1A1A1A" letter-spacing="-0.6">F6</text>
<!-- frame/bath -->
<path d="M1265,105.6 V94.7 H1299.8 V130.2 H1265 M1265,105.6 H1287.5 V130.2 M1293.7,97 V130.2" fill="none" stroke="#A6A6A6" stroke-width="1.1"/>
<path d="M1266.9,120 Q1275,123 1283.9,120.5 L1283,127 Q1280,129.5 1276,129 L1272,129.5 Q1268,128 1266.9,124 Z" fill="#A8A8A8"/>
<path d="M1271.2,108 H1278 L1284.3,110.6" fill="none" stroke="#A6A6A6" stroke-width="2"/>
<!-- tape -->
<rect x="1312.1" y="105.3" width="37.6" height="17.3" fill="url(#gold)" stroke="#2E2E2E" stroke-width="1.2"/>
<path d="M1312.8,106 H1318 Q1321.5,114 1318,121.9 H1312.8 Z" fill="#C8C8D0" stroke="#2E2E2E" stroke-width="1"/>
<path d="M1322.2,106 V122 M1326.5,106 V122 M1330.7,106 V122 M1335.3,106 V122 M1339.2,106 V122 M1343.5,106 V122 M1348,106 V122" stroke="#2A2A2A" stroke-width="1"/>
<path d="M1320,113.5 H1349" stroke="#E6D090" stroke-width="1.5" opacity="0.7"/>
<!-- last -->
<path d="M1371.3,108.2 L1380,108 V120 Z" fill="#A4A4A4"/>
<path d="M1363,124.6 H1380 M1363,128.8 H1380" stroke="#A6A6A6" stroke-width="1.5"/>

</svg>
<div id="dlg"></div>
<div id="dlgin"></div>
<div id="dlgx"></div><svg width="1380" height="795" style="position:absolute;left:0;top:0"><path d="M58.5,462.5 L65.5,469.5 M65.5,462.5 L58.5,469.5" stroke="#9A9894" stroke-width="2"/></svg>
<div class="lbl" style="left:31px;top:501px;color:#000">7 %)</div>
<div id="bottom"></div>
</body></html>
